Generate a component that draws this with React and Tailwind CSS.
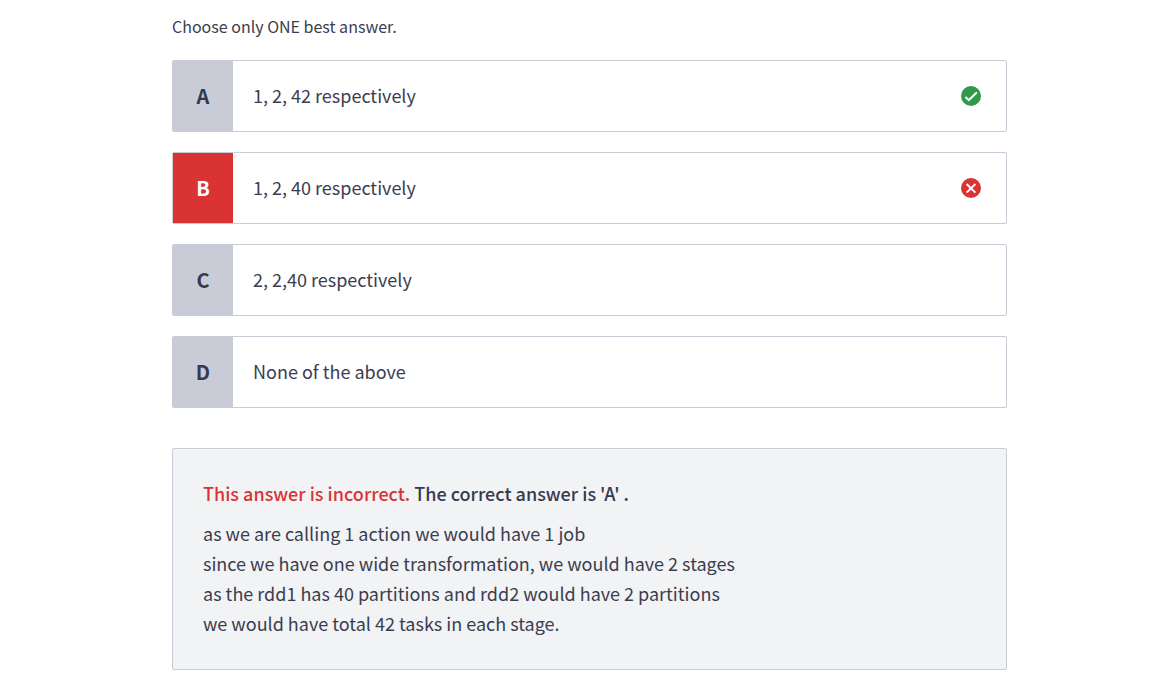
import React from "react";

const options = [
  { key: "A", text: "1, 2, 42 respectively", mark: "correct" },
  { key: "B", text: "1, 2, 40 respectively", mark: "wrong", chosen: true },
  { key: "C", text: "2, 2,40 respectively" },
  { key: "D", text: "None of the above" },
];

const explanation = [
  "as we are calling 1 action we would have 1 job",
  "since we have one wide transformation, we would have 2 stages",
  "as the rdd1 has 40 partitions and rdd2 would have 2 partitions",
  "we would have total 42 tasks in each stage.",
];

function Mark({ type }) {
  const correct = type === "correct";
  return (
    <svg
      viewBox="0 0 20 20"
      className="size-5 shrink-0"
      role="img"
      aria-label={correct ? "Correct" : "Incorrect"}
    >
      <circle cx="10" cy="10" r="10" className={correct ? "fill-[#32994a]" : "fill-[#d93333]"} />
      <path
        d={correct ? "M4.4 10.9 L7.8 14.1 L15.9 6.3" : "M5.6 6 L14.4 14.6 M14.4 6 L5.6 14.6"}
        fill="none"
        stroke="#ffffff"
        strokeWidth="2"
      />
    </svg>
  );
}

function Option({ option }) {
  return (
    <button
      type="button"
      aria-pressed={Boolean(option.chosen)}
      className="flex min-h-18 w-full items-stretch rounded-xs border border-[#c9ccd6] bg-white text-left"
    >
      <span
        className={
          option.chosen
            ? "flex w-15 shrink-0 items-center justify-center bg-[#d93333] text-xl font-bold text-white"
            : "flex w-15 shrink-0 items-center justify-center bg-[#c9ccd6] text-xl font-bold text-[#363a50]"
        }
      >
        {option.key}
      </span>
      <span className="flex flex-1 items-center justify-between gap-5 pr-[25px] pl-5 text-lg">
        <span className="pb-0.5">{option.text}</span>
        {option.mark && <Mark type={option.mark} />}
      </span>
    </button>
  );
}

export default function App() {
  return (
    <main className="min-h-screen bg-white pt-[14px] pr-[145px] pb-6 pl-43 font-['Noto_Sans_CJK_SC',sans-serif] text-[#3b3d50]">
      <p className="text-base leading-6">Choose only ONE best answer.</p>
      <div className="mt-[22px] flex flex-col gap-5">
        {options.map((option) => (
          <Option key={option.key} option={option} />
        ))}
      </div>
      <section className="mt-10 rounded-xs border border-[#c9ccd6] bg-[#f1f3f5] px-[30px] pt-[29px] pb-[31px] text-lg leading-[30px]">
        <h2 className="mb-2.5 font-medium text-[#363a50]">
          <span className="text-[#d93333]">This answer is incorrect.</span> The correct answer is 'A' .
        </h2>
        {explanation.map((line) => (
          <p key={line}>{line}</p>
        ))}
      </section>
    </main>
  );
}
